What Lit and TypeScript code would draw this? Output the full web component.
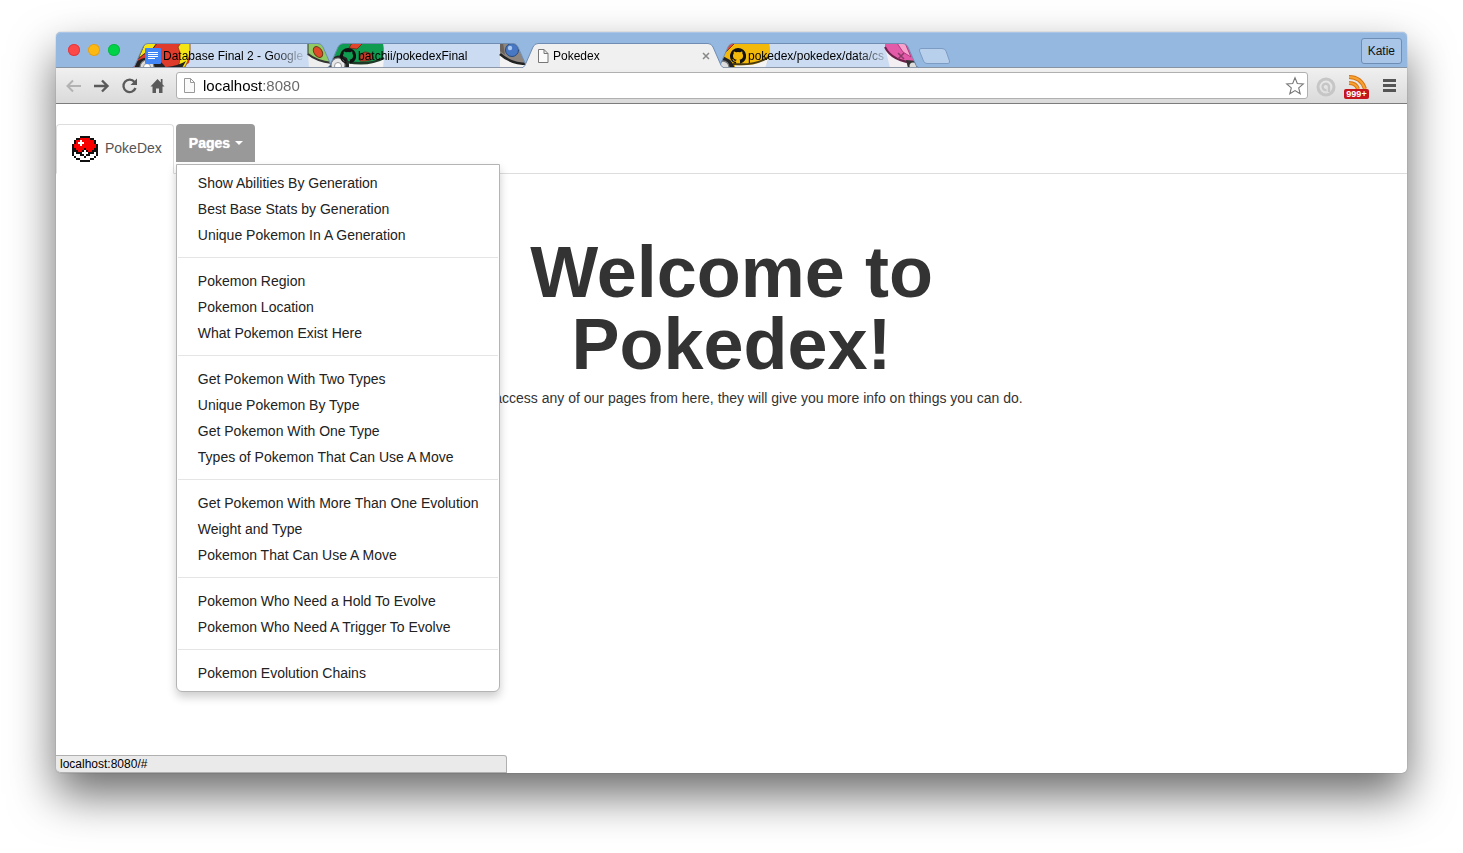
import { LitElement, html, svg, css } from "lit";
import { customElement, property } from "lit/decorators.js";
import { classMap } from "lit/directives/class-map.js";

const MENU_GROUPS: string[][] = [
  ["Show Abilities By Generation", "Best Base Stats by Generation", "Unique Pokemon In A Generation"],
  ["Pokemon Region", "Pokemon Location", "What Pokemon Exist Here"],
  ["Get Pokemon With Two Types", "Unique Pokemon By Type", "Get Pokemon With One Type", "Types of Pokemon That Can Use A Move"],
  ["Get Pokemon With More Than One Evolution", "Weight and Type", "Pokemon That Can Use A Move"],
  ["Pokemon Who Need a Hold To Evolve", "Pokemon Who Need A Trigger To Evolve"],
  ["Pokemon Evolution Chains"],
];

const BALL_ROWS = [
  "....BBBBB....",
  "..BBRRRRRBB..",
  ".BRRWRRRRRRB.",
  ".BRWWWRRRRRB.",
  "BRRRWRRRRRRRB",
  "BRRRRRRRRRRRB",
  "BBRRRRBRRRRBB",
  "BBBRRBWBRRBBB",
  "BWBBBWWWBBBWB",
  "BWWWBBWBBWWWB",
  ".BWWWWBWWWWB.",
  "..BBWWWWWBB..",
  "....BBBBB....",
];
const BALL_COLORS: Record<string, string> = { B: "#111", R: "#f80000", W: "#fff" };

type Theme = "red" | "green" | "active" | "yellow";

/* Decorations painted inside a 202 x 25 tab; the outline clips them. */
const ART: Record<Theme, unknown> = {
  red: svg`
    <path d="M0 25L8 9Q13 0 22 0H56Q60 12 57 20L48 25Z" fill="#df3c2c"/>
    <path d="M13 0H25L19 8L12 11L6 16Z" fill="#f4e616" stroke="#3b2418" stroke-width="1"/>
    <path d="M49 0H58Q59 14 53 24L46 25Q50 12 46 4Z" fill="#f4e616" stroke="#8c3a12" stroke-width=".8"/>
    <path d="M3 20Q14 11 26 17Q32 21 34 25H3Z" fill="#222"/>
    <circle cx="15" cy="24" r="7" fill="#ddd" stroke="#777" stroke-width="1.2"/>
    <circle cx="15" cy="24" r="3.500" fill="#fff" stroke="#999"/>
    <path d="M34 24Q46 23 54 18L50 25Z" fill="#222"/>
    <path d="M176 0H192Q196 6 199 22L194 23Q180 19 176 12Z" fill="#8fca62" stroke="#333" stroke-width="1"/>
    <ellipse cx="186" cy="9" rx="4" ry="6" transform="rotate(-35 186 9)" fill="#df4a28" stroke="#6b3a18"/>
    <path d="M176 11Q183 18 199 20V25H177Z" fill="#eee"/>
    <path d="M176 11Q184 18 200 20" fill="none" stroke="#333" stroke-width="2"/>`,
  green: svg`
    <path d="M4 19L9 5Q12 0 20 0H56Q58 10 55 19L48 25H18Z" fill="#0f9b50"/>
    <path d="M25 0H36L30 6L22 5Z" fill="#e0442c" stroke="#6b2a18" stroke-width=".8"/>
    <path d="M33 18Q32 10 38 9Q44 9 47 15Q42 19 33 18Z" fill="#c03a28" stroke="#5b2a18" stroke-width=".8"/>
    <path d="M2 17Q12 9 20 15L23 25H2Z" fill="#222"/>
    <path d="M22 20Q42 23 57 15L56 25H22Z" fill="#f4f4f4"/>
    <path d="M20 19Q42 23 57 15" fill="none" stroke="#1e3a26" stroke-width="2.500"/>
    <circle cx="11" cy="22" r="7" fill="#e8e8e8" stroke="#777" stroke-width="1.200"/>
    <circle cx="11" cy="23" r="3.500" fill="#fff" stroke="#999"/>
    <path d="M173 0H187Q192 4 200 25H186Q175 17 173 10Z" fill="#8d8580"/>
    <path d="M173 0H176L178 12L173 8Z" fill="#6b625d"/>
    <path d="M173 10Q184 20 199 21L202 25H173Z" fill="#f3f3f3"/>
    <path d="M173 11Q184 21 201 21" fill="none" stroke="#222" stroke-width="2.500"/>
    <circle cx="185" cy="7" r="6.500" fill="#4878c4" stroke="#264a80"/>
    <circle cx="183" cy="5" r="2.200" fill="#a9c8f2"/>`,
  active: null,
  yellow: svg`
    <path d="M4 16L9 5Q12 0 20 0H52Q55 10 50 20L40 25H14Z" fill="#f3b90a"/>
    <path d="M10 0H18L9 9L5 11Z" fill="#e0483c" stroke="#6b2a18" stroke-width=".8"/>
    <path d="M3 13Q14 14 18 25H0Z" fill="#222"/>
    <path d="M18 22Q40 24 52 14L48 25H18Z" fill="#f4f4f4"/>
    <path d="M16 21Q38 23 52 14" fill="none" stroke="#4a3a10" stroke-width="2"/>
    <circle cx="6" cy="24" r="6" fill="#ddd" stroke="#777" stroke-width="1.300"/>
    <path d="M168 0H190Q194 5 200 25H190Q172 16 168 4Z" fill="#e35aa8"/>
    <path d="M180 0H188L194 14L186 9Z" fill="#f5a3cd" stroke="#a82a72" stroke-width=".8"/>
    <path d="M168 4Q175 19 200 20V25H173Z" fill="#f3eef2"/>
    <path d="M168 4Q175 19 200 20" fill="none" stroke="#6a2048" stroke-width="2"/>
    <path d="M189 17L200 18L202 25H191Z" fill="#333"/>
    <circle cx="196" cy="23" r="3.500" fill="#ddd"/>`,
};

const docIcon = svg`<path d="M3.5 1.5H9L13 5.5V14.5H3.5ZM9 1.5V5.5H13" fill="#fbfbfb" stroke="#777"/>`;
const catIcon = svg`<path fill="#111" fill-rule="evenodd" d="M8 0A8 8 0 0 0 5.5 15.6C6 15.7 6.100 15.400 6.100 15.200V13.700C3.800 14.200 3.400 12.800 3.400 12.800C3 11.900 2.500 11.600 2.500 11.600C1.700 11.100 2.600 11.100 2.600 11.100C3.400 11.200 3.800 12 3.800 12C4.500 13.200 5.700 12.900 6.100 12.700C6.200 12.100 6.400 11.800 6.600 11.600C4.800 11.400 3 10.700 3 7.700C3 6.800 3.300 6.100 3.800 5.500C3.700 5.300 3.400 4.500 3.900 3.400C3.900 3.400 4.600 3.200 6.100 4.200A7.500 7.500 0 0 1 10 4.200C11.500 3.200 12.200 3.400 12.200 3.400C12.600 4.500 12.400 5.300 12.300 5.500C12.800 6.100 13.100 6.800 13.100 7.700C13.100 10.700 11.200 11.400 9.500 11.600C9.800 11.800 10 12.300 10 13.100V15.200C10 15.400 10.100 15.700 10.600 15.600A8 8 0 0 0 8 0Z"/>`;
const docsIcon = svg`<rect width="16" height="16" rx="1" fill="#4285f4"/><path d="M3 4.500H13M3 6.500H13M3 8.500H13M3 10.500H10" stroke="#fff" stroke-width="1"/>`;

@customElement("browser-tab")
class BrowserTab extends LitElement {
  @property() label = "";
  @property() theme: Theme = "active";
  @property() icon = "doc";
  @property({ type: Boolean }) closable = false;

  static styles = css`
    :host { display: block; position: relative; flex: 0 1 202px; min-width: 60px; margin-right: -7px; height: 25px; }
    :host([theme="active"]) { z-index: 1; }
    .shape { position: absolute; inset: 0; width: 100%; height: 100%; }
    .row { position: relative; display: flex; align-items: center; height: 100%; padding: 0 10px 0 13px; box-sizing: border-box; }
    .icon { flex: none; width: 16px; height: 16px; margin-right: 2px; }
    .label { flex: 1; min-width: 0; overflow: hidden; white-space: nowrap; font-size: 12px; line-height: 16px; color: #000;
      -webkit-mask-image: linear-gradient(90deg, #000 calc(100% - 36px), transparent); mask-image: linear-gradient(90deg, #000 calc(100% - 36px), transparent); }
    .close { display: grid; place-items: center; width: 16px; height: 16px; padding: 0; border: 0; background: none; }
  `;

  render() {
    const active = this.theme === "active";
    const icon = this.icon === "docs" ? docsIcon : this.icon === "cat" ? catIcon : docIcon;
    const edge = "M0 25L1.500 24Q3 23 4 20L11 4Q12.500 .500 16 .500H186Q189.500 .500 191 4L198 20Q199 23 200.500 24L202 25";
    return html`
      <svg class="shape" viewBox="0 0 202 25" preserveAspectRatio="none" aria-hidden="true">
        <defs><clipPath id="clip"><path d=${edge + "Z"} /></clipPath></defs>
        <path d=${edge + "Z"} fill=${active ? "#f0f0f0" : "#cbdcf2"} />
        <g clip-path="url(#clip)">${ART[this.theme]}</g>
        ${active ? null : svg`<path d="M0 24.500H202" stroke="#8c98a8"/>`}
        <path d=${edge} fill="none" stroke="#6f8db3" />
      </svg>
      <div class="row">
        <svg class="icon" viewBox="0 0 16 16" aria-hidden="true">${icon}</svg>
        <span class="label">${this.label}</span>
        <button class="close" aria-label="Close tab">
          ${this.closable ? html`<svg width="8" height="8" viewBox="0 0 8 8"><path d="M1 1L7 7M7 1L1 7" stroke=${active ? "#888" : "#8a3a68"} stroke-width="1.500"/></svg>` : null}
        </button>
      </div>`;
  }
}

@customElement("app-root")
class AppRoot extends LitElement {
  static styles = css`
    :host { display: flex; box-sizing: border-box; min-height: 100vh; padding: 32px 56px 80px; background: #fff; font-family: "Liberation Sans", Arial, sans-serif; overflow: hidden; }
    * { box-sizing: border-box; }
    button { font-family: inherit; }
    .window { flex: 1; min-width: 0; display: flex; flex-direction: column; border-radius: 5px; background: #fff;
      box-shadow: 0 22px 46px rgba(0, 0, 0, 0.58), 0 0 1px rgba(0, 0, 0, 0.5); }
    .titlebar { display: flex; align-items: flex-end; height: 36px; padding-left: 12px; padding-right: 5px; border-radius: 5px 5px 0 0;
      background: #94b8e0; box-shadow: inset 0 1px #a9c6e8, inset 0 -1px #8793a3; }
    .lights { display: flex; gap: 8px; margin-right: 12px; align-self: center; }
    .light { width: 12px; height: 12px; padding: 0; border: 0; border-radius: 50%; }
    .close { background: #fc4948; box-shadow: inset 0 0 0 1px #dd3c44; }
    .min { background: #fdb912; box-shadow: inset 0 0 0 1px #dfa023; }
    .max { background: #00d348; box-shadow: inset 0 0 0 1px #10b54a; }
    .tabs { flex: 1; min-width: 0; display: flex; align-items: flex-end; }
    .newtab { width: 34px; height: 20px; padding: 0 0 4px; margin-left: 5px; border: 0; background: none; }
    .newtab svg { display: block; }
    .user { align-self: center; height: 26px; margin-top: 2px; padding: 0 6px; border: 1px solid #6d8db5; border-radius: 3px; background: #a9c6e9; font-size: 12px; color: #111; }
    .toolbar { display: flex; align-items: center; gap: 10px; height: 36px; padding: 0 10px; background: linear-gradient(#f0f0f0, #dadada); border-bottom: 1px solid #7c7c7c; }
    .group { display: flex; align-items: center; gap: 12px; }
    .tool { display: grid; place-items: center; width: 16px; height: 18px; padding: 0; border: 0; background: none; }
    .tool svg { display: block; overflow: visible; }
    .omnibox { flex: 1; min-width: 0; display: flex; align-items: center; height: 27px; padding: 0 4px 0 5px; border: 1px solid #b0b0b0; border-radius: 3px; background: #fff; }
    .url { flex: 1; min-width: 0; height: 24px; margin-left: 5px; padding: 0; border: 0; outline: 0; font: 15px/24px "Liberation Sans", Arial, sans-serif;
      color: transparent; caret-color: #000; background: linear-gradient(90deg, #000 60px, #666 60px); -webkit-background-clip: text; background-clip: text; }
    .extensions { display: flex; align-items: center; gap: 10px; }
    .feed { display: flex; flex-direction: column; align-items: center; width: 25px; margin-top: 3px; padding: 0; border: 0; background: none; }
    .feed svg { display: block; }
    .badge { width: 25px; border-radius: 2px; background: #c4151c; color: #fff; font-weight: bold; font-size: 9px; line-height: 10px; }
    .hamburger { margin-left: 2px; }

    .page { flex: 1; display: flex; flex-direction: column; padding-top: 20px; color: #333; font-size: 14px; line-height: 20px; border-radius: 0 0 5px 5px; }
    .nav { display: flex; align-items: flex-start; margin: 0; padding: 0; list-style: none; height: 50px; border-bottom: 1px solid #ddd; }
    .item { position: relative; margin-right: 2px; }
    .brand { display: flex; align-items: center; gap: 7px; height: 50px; padding: 0 11px 0 15px; border: 1px solid #ddd; border-bottom-color: #fff; border-radius: 4px 4px 0 0; color: #555; text-decoration: none; background: #fff; }
    .brand-name { padding-bottom: 3px; }
    .pages { display: flex; align-items: center; gap: 5px; height: 38px; padding: 0 12px 0 13px; border: 0; border-radius: 4px 4px 0 0; background: #999; color: #fff; font-size: 14px; font-weight: bold; line-height: 20px; text-shadow: 0 0 1px #fff; }
    .caret { border-top: 4px solid #fff; border-left: 4px solid transparent; border-right: 4px solid transparent; }
    .menu { position: absolute; z-index: 2; top: 100%; left: 0; margin: 2px 0 0; padding: 5px 0; list-style: none; background: #fff; border: 1px solid #b4b4b4; border-radius: 0 0 6px 6px; box-shadow: 0 5px 10px rgba(0, 0, 0, 0.2); }
    .link { display: block; padding: 3px 21px; color: #222; text-decoration: none; white-space: nowrap; }
    .divider { height: 1px; margin: 9px 1px 10px; background: #e5e5e5; }
    .hero { width: 100%; max-width: 640px; margin: 62px auto 0; text-align: center; }
    .title { margin: 0 0 8px; font-size: 72px; line-height: 72px; font-weight: bold; }
    .intro { margin: 0; }
    .status { width: 33.4%; height: 18px; margin-top: auto; padding: 0 4px; border: 1px solid #b0b0b0; border-left: 0; border-radius: 0 3px 0 5px; background: #eaeaea; color: #000; font-size: 12px; line-height: 16px; }
  `;

  private ball() {
    return html`<svg width="26" height="26" viewBox="0 0 13 13" shape-rendering="crispEdges" aria-hidden="true">
      ${BALL_ROWS.map((row, y) => [...row].map((c, x) => (c === "." ? null : svg`<rect x=${x} y=${y} width="1" height="1" fill=${BALL_COLORS[c]} />`)))}
    </svg>`;
  }

  private toolbar() {
    return html`<div class="toolbar">
      <div class="group">
        <button class="tool" aria-label="Back"><svg width="16" height="14" viewBox="0 0 16 14"><path d="M7 1.500L1.500 7L7 12.500M1.500 7H15" fill="none" stroke="#b3b3b3" stroke-width="2"/></svg></button>
        <button class="tool" aria-label="Forward"><svg width="16" height="14" viewBox="0 0 16 14"><path d="M8 1.500L13.500 7L8 12.500M13.500 7H0" fill="none" stroke="#5a5a5a" stroke-width="2.400"/></svg></button>
        <button class="tool" aria-label="Reload"><svg width="16" height="16" viewBox="0 0 16 16"><path d="M12.500 4A6.200 6.200 0 1 0 13.500 10" fill="none" stroke="#5a5a5a" stroke-width="2.300"/><path d="M15 .500V7H8.500Z" fill="#5a5a5a"/></svg></button>
        <button class="tool" aria-label="Home"><svg width="16" height="16" viewBox="0 0 16 16"><path d="M7.500 1L.500 8.500H2.500V15H6V10.500H9V15H12.500V8.500H14.500L12.500 6.200V1H10.800V4.400Z" fill="#5a5a5a"/></svg></button>
      </div>
      <div class="omnibox">
        <svg width="16" height="16" viewBox="0 0 16 16" aria-hidden="true"><path d="M2.500 .500H8.500L12.500 4.500V14.500H2.500ZM8.500 .500V4.500H12.500" fill="#fafafa" stroke="#999"/></svg>
        <input class="url" aria-label="Address" value="localhost:8080" />
        <button class="tool" aria-label="Bookmark"><svg width="16" height="18" viewBox="1 0 16 18"><path d="M9 .800L11.300 6.500L17.300 7L12.700 10.900L14.200 16.800L9 13.600L3.800 16.800L5.300 10.900L.700 7L6.700 6.500Z" fill="#fff" stroke="#777" stroke-width="1.100"/></svg></button>
      </div>
      <div class="extensions">
        <button class="tool" aria-label="Extension"><svg width="16" height="20" viewBox="2 0 16 20"><circle cx="10" cy="10" r="8" fill="none" stroke="#c6c6c6" stroke-width="3"/><path d="M10.500 13A3.200 3.200 0 1 1 13 10V15" fill="none" stroke="#c6c6c6" stroke-width="2.400"/></svg></button>
        <button class="feed" aria-label="Unread feeds">
          <svg width="20" height="14" viewBox="0 0 20 14"><path d="M2 2Q14 2 18 14M2 8Q9 8 11 14" fill="none" stroke="#d87410" stroke-width="4"/><path d="M2 2Q14 2 18 14M2 8Q9 8 11 14" fill="none" stroke="#f8a232" stroke-width="2"/></svg>
          <span class="badge">999+</span>
        </button>
        <button class="tool hamburger" aria-label="Menu"><svg width="13" height="13" viewBox="0 0 13 13"><path d="M0 1.500H13M0 6.500H13M0 11.500H13" stroke="#555" stroke-width="3"/></svg></button>
      </div>
    </div>`;
  }

  render() {
    return html`<div class="window">
      <div class="titlebar">
        <div class="lights">
          ${["close", "min", "max"].map((n) => html`<button class=${classMap({ light: true, [n]: true })} aria-label=${n}></button>`)}
        </div>
        <div class="tabs">
          <browser-tab theme="red" icon="docs" label="Database Final 2 - Google"></browser-tab>
          <browser-tab theme="green" icon="cat" label="batchii/pokedexFinal"></browser-tab>
          <browser-tab theme="active" label="Pokedex" closable></browser-tab>
          <browser-tab theme="yellow" icon="cat" label="pokedex/pokedex/data/cs" closable></browser-tab>
          <button class="newtab" aria-label="New tab"><svg width="34" height="16" viewBox="0 0 34 16"><path d="M4 .500H25Q28 .500 29 3L32.500 13Q33 15.500 31 15.500H10Q7.500 15.500 6.500 13L2.500 3Q2 .500 4 .500Z" fill="#b9d0ed" stroke="#7c9cc4"/></svg></button>
        </div>
        <button class="user">Katie</button>
      </div>
      ${this.toolbar()}
      <main class="page">
        <ul class="nav">
          <li class="item"><a class="brand" href="#">${this.ball()}<span class="brand-name">PokeDex</span></a></li>
          <li class="item">
            <button class="pages" aria-expanded="true">Pages<span class="caret"></span></button>
            <ul class="menu">
              ${MENU_GROUPS.map((group, i) => html`
                ${i ? html`<li class="divider" role="separator"></li>` : null}
                ${group.map((name) => html`<li><a class="link" href="#">${name}</a></li>`)}`)}
            </ul>
          </li>
        </ul>
        <section class="hero">
          <h1 class="title">Welcome to Pokedex!</h1>
          <p class="intro">You can access any of our pages from here, they will give you more info on things you can do.</p>
        </section>
        <div class="status">localhost:8080/#</div>
      </main>
    </div>`;
  }
}
